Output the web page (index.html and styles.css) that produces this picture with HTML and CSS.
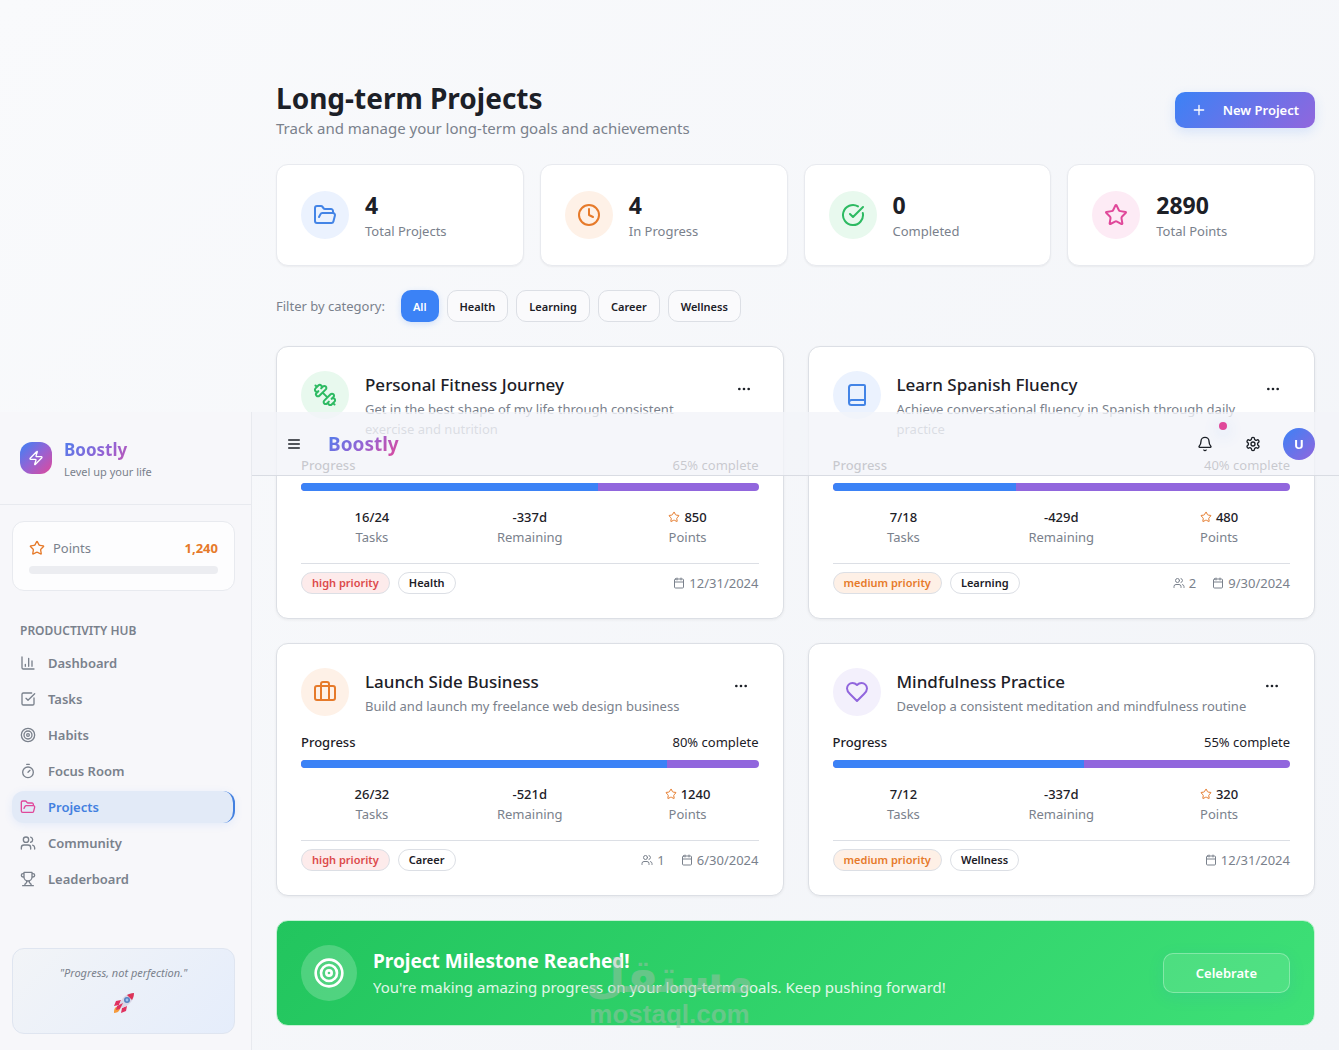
FILE: index.html
```html
<!DOCTYPE html>
<html lang="en">
<head>
  <meta charset="UTF-8">
  <meta name="viewport" content="width=device-width, initial-scale=1">
  <title>Boostly - Long-term Projects</title>
  <link rel="stylesheet" href="styles.css">
</head>
<body>

  <svg class="sprite" aria-hidden="true">
    <symbol id="i-zap" viewBox="0 0 24 24"><path d="M4 14a1 1 0 0 1-.78-1.63l9.9-10.2a.5.5 0 0 1 .86.46l-1.92 6.02A1 1 0 0 0 13 10h7a1 1 0 0 1 .78 1.63l-9.9 10.2a.5.5 0 0 1-.86-.46l1.92-6.02A1 1 0 0 0 11 14z"/></symbol>
    <symbol id="i-star" viewBox="0 0 24 24"><path d="M11.525 2.295a.53.53 0 0 1 .95 0l2.31 4.679a2.123 2.123 0 0 0 1.595 1.16l5.166.756a.53.53 0 0 1 .294.904l-3.736 3.638a2.123 2.123 0 0 0-.611 1.878l.882 5.14a.53.53 0 0 1-.771.56l-4.618-2.428a2.122 2.122 0 0 0-1.973 0L6.396 21.01a.53.53 0 0 1-.77-.56l.881-5.139a2.122 2.122 0 0 0-.611-1.879L2.16 9.795a.53.53 0 0 1 .294-.906l5.165-.755a2.122 2.122 0 0 0 1.597-1.16z"/></symbol>
    <symbol id="i-chart" viewBox="0 0 24 24"><path d="M3 3v16a2 2 0 0 0 2 2h16M18 17V9M13 17V5M8 17v-3"/></symbol>
    <symbol id="i-tasks" viewBox="0 0 24 24"><path d="M21 10.5V19a2 2 0 0 1-2 2H5a2 2 0 0 1-2-2V5a2 2 0 0 1 2-2h12.5M9 11l3 3L22 4"/></symbol>
    <symbol id="i-target" viewBox="0 0 24 24"><circle cx="12" cy="12" r="10"/><circle cx="12" cy="12" r="6"/><circle cx="12" cy="12" r="2"/></symbol>
    <symbol id="i-timer" viewBox="0 0 24 24"><path d="M10 2h4M12 14l3-3"/><circle cx="12" cy="14" r="8"/></symbol>
    <symbol id="i-folder" viewBox="0 0 24 24"><path d="m6 14 1.5-2.9A2 2 0 0 1 9.24 10H20a2 2 0 0 1 1.94 2.5l-1.54 6a2 2 0 0 1-1.95 1.5H4a2 2 0 0 1-2-2V5a2 2 0 0 1 2-2h3.9a2 2 0 0 1 1.69.9l.81 1.2a2 2 0 0 0 1.67.9H18a2 2 0 0 1 2 2v2"/></symbol>
    <symbol id="i-users" viewBox="0 0 24 24"><path d="M16 21v-2a4 4 0 0 0-4-4H6a4 4 0 0 0-4 4v2M22 21v-2a4 4 0 0 0-3-3.87M16 3.13a4 4 0 0 1 0 7.75"/><circle cx="9" cy="7" r="4"/></symbol>
    <symbol id="i-trophy" viewBox="0 0 24 24"><path d="M6 9H4.5a2.5 2.5 0 0 1 0-5H6M18 9h1.5a2.5 2.5 0 0 0 0-5H18M4 22h16M10 14.66V17c0 .55-.47.98-.97 1.21C7.85 18.75 7 20.24 7 22M14 14.66V17c0 .55.47.98.97 1.21C16.15 18.75 17 20.24 17 22M18 2H6v7a6 6 0 0 0 12 0V2Z"/></symbol>
    <symbol id="i-menu" viewBox="0 0 24 24"><path d="M4 12h16M4 6h16M4 18h16"/></symbol>
    <symbol id="i-bell" viewBox="0 0 24 24"><path d="M10.268 21a2 2 0 0 0 3.464 0M3.262 15.326A1 1 0 0 0 4 17h16a1 1 0 0 0 .74-1.673C19.41 13.956 18 12.499 18 8A6 6 0 0 0 6 8c0 4.499-1.411 5.956-2.738 7.326"/></symbol>
    <symbol id="i-settings" viewBox="0 0 24 24"><path d="M12.22 2h-.44a2 2 0 0 0-2 2v.18a2 2 0 0 1-1 1.73l-.43.25a2 2 0 0 1-2 0l-.15-.08a2 2 0 0 0-2.73.73l-.22.38a2 2 0 0 0 .73 2.73l.15.1a2 2 0 0 1 1 1.72v.51a2 2 0 0 1-1 1.74l-.15.09a2 2 0 0 0-.73 2.73l.22.38a2 2 0 0 0 2.73.73l.15-.08a2 2 0 0 1 2 0l.43.25a2 2 0 0 1 1 1.73V20a2 2 0 0 0 2 2h.44a2 2 0 0 0 2-2v-.18a2 2 0 0 1 1-1.73l.43-.25a2 2 0 0 1 2 0l.15.08a2 2 0 0 0 2.73-.73l.22-.39a2 2 0 0 0-.73-2.73l-.15-.08a2 2 0 0 1-1-1.74v-.5a2 2 0 0 1 1-1.74l.15-.09a2 2 0 0 0 .73-2.73l-.22-.38a2 2 0 0 0-2.73-.73l-.15.08a2 2 0 0 1-2 0l-.43-.25a2 2 0 0 1-1-1.73V4a2 2 0 0 0-2-2z"/><circle cx="12" cy="12" r="3"/></symbol>
    <symbol id="i-plus" viewBox="0 0 24 24"><path d="M5 12h14M12 5v14"/></symbol>
    <symbol id="i-clock" viewBox="0 0 24 24"><circle cx="12" cy="12" r="10"/><path d="M12 6v6l4 2"/></symbol>
    <symbol id="i-check" viewBox="0 0 24 24"><path d="M21.801 10A10 10 0 1 1 17 3.335M9 11l3 3L22 4"/></symbol>
    <symbol id="i-dots" viewBox="0 0 24 24"><circle cx="12" cy="12" r="1"/><circle cx="19" cy="12" r="1"/><circle cx="5" cy="12" r="1"/></symbol>
    <symbol id="i-calendar" viewBox="0 0 24 24"><path d="M8 2v4M16 2v4M3 10h18"/><rect x="3" y="4" width="18" height="18" rx="2"/></symbol>
    <symbol id="i-dumbbell" viewBox="0 0 24 24"><path d="M14.4 14.4 9.6 9.6M18.657 21.485a2 2 0 1 1-2.829-2.828l-1.767 1.768a2 2 0 1 1-2.829-2.829l6.364-6.364a2 2 0 1 1 2.829 2.829l-1.768 1.767a2 2 0 1 1 2.828 2.829zM21.5 21.5l-1.4-1.4M3.9 3.9 2.5 2.5M6.404 12.768a2 2 0 1 1-2.829-2.829l1.768-1.767a2 2 0 1 1-2.828-2.829l2.828-2.828a2 2 0 1 1 2.829 2.828l1.767-1.768a2 2 0 1 1 2.829 2.829z"/></symbol>
    <symbol id="i-book" viewBox="0 0 24 24"><path d="M4 19.5v-15A2.5 2.5 0 0 1 6.5 2H19a1 1 0 0 1 1 1v18a1 1 0 0 1-1 1H6.5a1 1 0 0 1 0-5H20"/></symbol>
    <symbol id="i-briefcase" viewBox="0 0 24 24"><path d="M16 20V4a2 2 0 0 0-2-2h-4a2 2 0 0 0-2 2v16"/><rect x="2" y="6" width="20" height="14" rx="2"/></symbol>
    <symbol id="i-heart" viewBox="0 0 24 24"><path d="M19 14c1.49-1.46 3-3.21 3-5.5A5.5 5.5 0 0 0 16.5 3c-1.76 0-3 .5-4.5 2-1.5-1.5-2.74-2-4.5-2A5.5 5.5 0 0 0 2 8.5c0 2.3 1.5 4.05 3 5.5l7 7Z"/></symbol>
  </svg>

  <aside class="sidebar">
    <div class="brand">
      <span class="brand-icon"><svg class="icon"><use href="#i-zap"/></svg></span>
      <div>
        <div class="logo-text">Boostly</div>
        <div class="tagline">Level up your life</div>
      </div>
    </div>

    <div class="sidebar-body">
      <div class="points-card">
        <div class="points-row">
          <svg class="icon"><use href="#i-star"/></svg>
          <span>Points</span>
          <strong>1,240</strong>
        </div>
        <div class="points-bar"></div>
      </div>

      <div class="nav-label">Productivity Hub</div>
      <nav class="nav">
        <a href="#"><svg class="icon"><use href="#i-chart"/></svg>Dashboard</a>
        <a href="#"><svg class="icon"><use href="#i-tasks"/></svg>Tasks</a>
        <a href="#"><svg class="icon"><use href="#i-target"/></svg>Habits</a>
        <a href="#"><svg class="icon"><use href="#i-timer"/></svg>Focus Room</a>
        <a href="#" class="active"><svg class="icon"><use href="#i-folder"/></svg>Projects</a>
        <a href="#"><svg class="icon"><use href="#i-users"/></svg>Community</a>
        <a href="#"><svg class="icon"><use href="#i-trophy"/></svg>Leaderboard</a>
      </nav>

      <div class="quote">
        <p>"Progress, not perfection."</p>
        <svg class="rocket" viewBox="0 0 24 24">
          <path d="M3 17c1-2 4-1 5 1-1 3-4 4-6 4 0-2 0-3 1-5z" fill="#f59a3c"/>
          <path d="M9 9 4 10l-2 5 5-1zM15 15l-1 5-5 2 1-5z" fill="#e0315f"/>
          <path d="M22 2c-7 0-12 4-15 12l3 3c8-3 12-8 12-15z" fill="#d9d6e6"/>
          <path d="M22 2c-3 0-5 1-7 2l5 5c1-2 2-4 2-7z" fill="#dd3358"/>
          <circle cx="15" cy="9" r="3" fill="#5683c2"/>
          <circle cx="15" cy="9" r="1.4" fill="#9cc3ef"/>
          <path d="m11 12-6 3-1 4 4-1z" fill="#e0315f"/>
        </svg>
      </div>
    </div>
  </aside>

  <header class="topbar">
    <button class="icon-btn" aria-label="Toggle sidebar"><svg class="icon"><use href="#i-menu"/></svg></button>
    <span class="logo-text">Boostly</span>
    <div class="topbar-actions">
      <button class="icon-btn" aria-label="Notifications"><svg class="icon"><use href="#i-bell"/></svg><span class="dot"></span></button>
      <button class="icon-btn" aria-label="Settings"><svg class="icon"><use href="#i-settings"/></svg></button>
      <button class="avatar">U</button>
    </div>
  </header>

  <main class="main">
    <div class="page-head">
      <div>
        <h1>Long-term Projects</h1>
        <p>Track and manage your long-term goals and achievements</p>
      </div>
      <button class="new-btn"><svg class="icon"><use href="#i-plus"/></svg>New Project</button>
    </div>

    <div class="stats">
      <div class="stat">
        <span class="bubble blue"><svg class="icon"><use href="#i-folder"/></svg></span>
        <div><div class="stat-value">4</div><div class="stat-label">Total Projects</div></div>
      </div>
      <div class="stat">
        <span class="bubble orange"><svg class="icon"><use href="#i-clock"/></svg></span>
        <div><div class="stat-value">4</div><div class="stat-label">In Progress</div></div>
      </div>
      <div class="stat">
        <span class="bubble green"><svg class="icon"><use href="#i-check"/></svg></span>
        <div><div class="stat-value">0</div><div class="stat-label">Completed</div></div>
      </div>
      <div class="stat">
        <span class="bubble pink"><svg class="icon"><use href="#i-star"/></svg></span>
        <div><div class="stat-value">2890</div><div class="stat-label">Total Points</div></div>
      </div>
    </div>

    <div class="filters">
      <span>Filter by category:</span>
      <button class="active">All</button>
      <button>Health</button>
      <button>Learning</button>
      <button>Career</button>
      <button>Wellness</button>
    </div>

    <div class="projects" id="projectList"></div>

    <div class="banner">
      <span class="banner-icon"><svg class="icon"><use href="#i-target"/></svg></span>
      <div class="banner-text">
        <h2>Project Milestone Reached!</h2>
        <p>You're making amazing progress on your long-term goals. Keep pushing forward!</p>
      </div>
      <button class="celebrate">Celebrate</button>
    </div>
  </main>

  <div class="watermark">
    <span lang="ar" dir="rtl">مستقل</span>
    <span>mostaql.com</span>
  </div>

  <script>
    const projects = [
      { title: 'Personal Fitness Journey', text: 'Get in the best shape of my life through consistent exercise and nutrition', icon: 'dumbbell', color: 'green', percent: 65, tasks: '16/24', left: '-337d', points: 850, priority: 'high', category: 'Health', people: 0, date: '12/31/2024' },
      { title: 'Learn Spanish Fluency', text: 'Achieve conversational fluency in Spanish through daily practice', icon: 'book', color: 'blue', percent: 40, tasks: '7/18', left: '-429d', points: 480, priority: 'medium', category: 'Learning', people: 2, date: '9/30/2024' },
      { title: 'Launch Side Business', text: 'Build and launch my freelance web design business', icon: 'briefcase', color: 'orange', percent: 80, tasks: '26/32', left: '-521d', points: 1240, priority: 'high', category: 'Career', people: 1, date: '6/30/2024' },
      { title: 'Mindfulness Practice', text: 'Develop a consistent meditation and mindfulness routine', icon: 'heart', color: 'purple', percent: 55, tasks: '7/12', left: '-337d', points: 320, priority: 'medium', category: 'Wellness', people: 0, date: '12/31/2024' }
    ];

    const icon = name => `<svg class="icon"><use href="#i-${name}"/></svg>`;

    document.getElementById('projectList').innerHTML = projects.map(p => `
      <article class="project">
        <div class="project-head">
          <div class="project-info">
            <span class="bubble ${p.color}">${icon(p.icon)}</span>
            <div>
              <h3>${p.title}</h3>
              <p>${p.text}</p>
            </div>
          </div>
          <button class="icon-btn" aria-label="More options">${icon('dots')}</button>
        </div>
        <div class="progress-row"><span>Progress</span><span>${p.percent}% complete</span></div>
        <div class="progress"><div class="progress-fill" style="width: ${p.percent}%"></div></div>
        <div class="numbers">
          <div><strong>${p.tasks}</strong><span>Tasks</span></div>
          <div><strong>${p.left}</strong><span>Remaining</span></div>
          <div><strong>${icon('star')}${p.points}</strong><span>Points</span></div>
        </div>
        <div class="project-foot">
          <span class="badge ${p.priority}">${p.priority} priority</span>
          <span class="badge">${p.category}</span>
          <div class="meta">
            ${p.people ? `<span>${icon('users')}${p.people}</span>` : ''}
            <span>${icon('calendar')}${p.date}</span>
          </div>
        </div>
      </article>
    `).join('');
  </script>

</body>
</html>
```
FILE: styles.css
```css
:root {
  --text: #1c2027;
  --muted: #7a818c;
  --border: #dcdfe5;
  --soft-border: #e8eaef;
  --blue: #3b82f6;
  --purple: #9166dd;
  --pink: #e0489a;
  --orange: #e67a2a;
  --sidebar-width: 252px;
  --bar-top: 412px;
}

* {
  box-sizing: border-box;
}

body {
  margin: 0;
  font-family: 'Noto Sans', 'Open Sans', sans-serif;
  font-size: 13px;
  line-height: 20px;
  color: var(--text);
  background: linear-gradient(135deg, #f9fafc, #f2f4f8);
}

h1, h2, h3, p {
  margin: 0;
}

button {
  font-family: inherit;
  border: 0;
  padding: 0;
  color: inherit;
  background: none;
  cursor: pointer;
}

.sprite {
  display: none;
}

.icon {
  width: 16px;
  height: 16px;
  flex-shrink: 0;
  fill: none;
  stroke: currentColor;
  stroke-width: 2;
  stroke-linecap: round;
  stroke-linejoin: round;
}

.logo-text {
  font-size: 19px;
  line-height: 28px;
  font-weight: 700;
  color: transparent;
  background: linear-gradient(135deg, #4a80ee, #9563d4, #e0489a);
  -webkit-background-clip: text;
  background-clip: text;
}

/* sidebar */

.sidebar {
  position: fixed;
  top: var(--bar-top);
  bottom: 0;
  left: 0;
  width: var(--sidebar-width);
  display: flex;
  flex-direction: column;
  background: #f7f7fa;
  border-right: 1px solid var(--soft-border);
}

.brand {
  display: flex;
  align-items: center;
  gap: 12px;
  padding: 24px 20px;
  border-bottom: 1px solid var(--soft-border);
}

.brand .logo-text {
  font-size: 17px;
}

.brand-icon {
  width: 32px;
  height: 32px;
  border-radius: 12px;
  display: flex;
  align-items: center;
  justify-content: center;
  color: #fff;
  background: linear-gradient(135deg, #3b82f6, #9563d4, #e0489a);
}

.tagline {
  font-size: 11px;
  line-height: 16px;
  color: var(--muted);
}

.sidebar-body {
  flex: 1;
  display: flex;
  flex-direction: column;
  padding: 16px 16px 16px 12px;
}

.points-card {
  padding: 16px;
  border: 1px solid var(--soft-border);
  border-radius: 12px;
  background: #fdfdfe;
  margin-bottom: 24px;
}

.points-row {
  display: flex;
  align-items: center;
  gap: 8px;
  margin-bottom: 8px;
  color: var(--muted);
}

.points-row .icon,
.points-row strong {
  color: var(--orange);
}

.points-row strong {
  margin-left: auto;
}

.points-bar {
  height: 8px;
  border-radius: 4px;
  background: #ecedf1;
}

.nav-label {
  padding: 0 8px;
  font-size: 12px;
  line-height: 32px;
  font-weight: 600;
  text-transform: uppercase;
  color: var(--muted);
}

.nav {
  display: flex;
  flex-direction: column;
  gap: 4px;
}

.nav a {
  display: flex;
  align-items: center;
  gap: 12px;
  height: 32px;
  padding: 0 8px;
  border-radius: 12px;
  font-weight: 600;
  color: var(--muted);
  text-decoration: none;
}

.nav a.active {
  color: #4380e0;
  background: #e2eaf7;
  border-right: 2px solid #4380e0;
  box-shadow: 0 2px 8px rgba(59, 130, 246, 0.1);
}

.nav a.active .icon {
  color: var(--pink);
}

.quote {
  margin-top: auto;
  padding: 16px;
  border: 1px solid #dfe5f0;
  border-radius: 12px;
  text-align: center;
  background: linear-gradient(135deg, #f2f4f7, #e5edfb);
}

.quote p {
  margin-bottom: 8px;
  font-size: 11px;
  line-height: 16px;
  font-style: italic;
  color: var(--muted);
}

.rocket {
  display: block;
  width: 24px;
  height: 28px;
  margin: 0 auto;
}

/* top bar */

.topbar {
  position: fixed;
  top: var(--bar-top);
  left: var(--sidebar-width);
  right: 0;
  z-index: 2;
  height: 64px;
  display: flex;
  align-items: center;
  gap: 16px;
  padding: 0 24px;
  background: rgba(243, 244, 249, 0.8);
  border-bottom: 1px solid #d9dce3;
}

.topbar-actions {
  margin-left: auto;
  display: flex;
  align-items: center;
  gap: 12px;
}

.icon-btn {
  position: relative;
  width: 36px;
  height: 36px;
  display: flex;
  align-items: center;
  justify-content: center;
}

.dot {
  position: absolute;
  top: -4px;
  right: -4px;
  width: 8px;
  height: 8px;
  border-radius: 50%;
  background: var(--pink);
  box-shadow: 0 4px 16px rgba(59, 130, 246, 0.3);
}

.avatar {
  width: 32px;
  height: 32px;
  border-radius: 50%;
  font-size: 13px;
  font-weight: 700;
  color: #fff;
  background: linear-gradient(135deg, var(--blue), var(--purple));
}

/* page */

.main {
  margin-left: var(--sidebar-width);
  padding: 80px 24px 24px;
  display: flex;
  flex-direction: column;
  gap: 24px;
}

.page-head {
  display: flex;
  align-items: center;
  justify-content: space-between;
}

.page-head h1 {
  font-size: 28px;
  line-height: 36px;
}

.page-head p {
  font-size: 15px;
  line-height: 24px;
  color: var(--muted);
}

.new-btn {
  display: flex;
  align-items: center;
  gap: 16px;
  height: 36px;
  padding: 0 16px;
  border-radius: 10px;
  font-size: 13px;
  font-weight: 600;
  color: #fff;
  background: linear-gradient(135deg, var(--blue), var(--purple));
  box-shadow: 0 4px 12px rgba(59, 130, 246, 0.16);
}

.stats {
  display: grid;
  grid-template-columns: repeat(4, 1fr);
  gap: 16px;
}

.stat {
  display: flex;
  align-items: center;
  gap: 16px;
  padding: 24px;
  background: #fff;
  border: 1px solid var(--soft-border);
  border-radius: 12px;
  box-shadow: 0 1px 2px rgba(0, 0, 0, 0.05);
}

.stat-value {
  font-size: 23px;
  line-height: 32px;
  font-weight: 700;
}

.stat-label {
  color: var(--muted);
}

.bubble {
  width: 48px;
  height: 48px;
  flex-shrink: 0;
  border-radius: 50%;
  display: flex;
  align-items: center;
  justify-content: center;
}

.bubble .icon {
  width: 24px;
  height: 24px;
}

.blue { color: #4384e6; background: #ebf2fe; }
.orange { color: var(--orange); background: #fef1e7; }
.green { color: #2dba62; background: #e8f9ee; }
.pink { color: var(--pink); background: #fdebf5; }
.purple { color: var(--purple); background: #f3f0fc; }

.filters {
  display: flex;
  align-items: center;
  gap: 8px;
}

.filters span {
  margin-right: 8px;
  color: var(--muted);
}

.filters button {
  height: 32px;
  padding: 0 12px;
  border: 1px solid var(--border);
  border-radius: 10px;
  font-size: 11px;
  font-weight: 600;
  background: #fafafc;
}

.filters button.active {
  border: 0;
  color: #fff;
  background: var(--blue);
  box-shadow: 0 2px 6px rgba(59, 130, 246, 0.2);
}

/* project cards */

.projects {
  display: grid;
  grid-template-columns: repeat(2, 1fr);
  gap: 24px;
}

.project {
  padding: 24px;
  background: #fff;
  border: 1px solid var(--border);
  border-radius: 12px;
  box-shadow: 0 1px 3px rgba(0, 0, 0, 0.06);
}

.project-head {
  display: flex;
  align-items: flex-start;
  justify-content: space-between;
  gap: 4px;
  margin-bottom: 16px;
}

.project-info {
  display: flex;
  gap: 16px;
}

.project-info h3 {
  font-size: 17px;
  line-height: 28px;
  font-weight: 500;
}

.project-info p {
  color: var(--muted);
}

.progress-row {
  display: flex;
  justify-content: space-between;
  margin-bottom: 8px;
}

.progress-row span:first-child {
  font-weight: 500;
}

.progress {
  height: 8px;
  margin-bottom: 16px;
  border-radius: 4px;
  overflow: hidden;
  background: var(--purple);
}

.progress-fill {
  height: 100%;
  background: var(--blue);
}

.numbers {
  display: grid;
  grid-template-columns: repeat(3, 1fr);
  gap: 16px;
  padding-bottom: 16px;
  text-align: center;
  border-bottom: 1px solid var(--border);
}

.numbers strong {
  display: flex;
  align-items: center;
  justify-content: center;
  gap: 4px;
  font-weight: 500;
}

.numbers span {
  color: var(--muted);
}

.numbers .icon,
.meta .icon {
  width: 12px;
  height: 12px;
}

.numbers .icon {
  color: var(--orange);
}

.project-foot {
  display: flex;
  align-items: center;
  gap: 8px;
  padding-top: 8px;
}

.badge {
  padding: 0 10px;
  border: 1px solid var(--border);
  border-radius: 11px;
  font-size: 11px;
  font-weight: 600;
}

.badge.high {
  color: #dc4a4a;
  background: #fdebeb;
}

.badge.medium {
  color: var(--orange);
  background: #fef0e6;
}

.meta {
  margin-left: auto;
  display: flex;
  gap: 16px;
  color: var(--muted);
}

.meta span {
  display: flex;
  align-items: center;
  gap: 4px;
}

/* milestone banner */

.banner {
  display: flex;
  align-items: center;
  gap: 16px;
  padding: 24px;
  border: 1px solid #c5f1d5;
  border-radius: 12px;
  color: #fff;
  background: linear-gradient(135deg, #22c55e, #3ee077);
}

.banner-icon {
  width: 56px;
  height: 56px;
  flex-shrink: 0;
  border-radius: 50%;
  display: flex;
  align-items: center;
  justify-content: center;
  background: rgba(255, 255, 255, 0.2);
}

.banner-icon .icon {
  width: 32px;
  height: 32px;
}

.banner h2 {
  font-size: 19px;
  line-height: 28px;
}

.banner p {
  font-size: 15px;
  line-height: 24px;
  opacity: 0.85;
}

.celebrate {
  height: 40px;
  padding: 0 32px;
  margin-left: auto;
  border: 1px solid rgba(255, 255, 255, 0.3);
  border-radius: 10px;
  font-size: 13px;
  font-weight: 600;
  background: rgba(255, 255, 255, 0.1);
  box-shadow: 0 4px 16px rgba(59, 130, 246, 0.12);
}

.watermark {
  position: absolute;
  bottom: 22px;
  left: 50%;
  transform: translateX(-50%);
  z-index: 3;
  display: flex;
  flex-direction: column;
  align-items: center;
  font-family: 'Liberation Sans', sans-serif;
  font-size: 26px;
  line-height: 28px;
  font-weight: 700;
  color: rgba(160, 190, 170, 0.5);
  pointer-events: none;
}

.watermark [lang='ar'] {
  font-family: 'DejaVu Sans', sans-serif;
  font-size: 46px;
  line-height: 48px;
}
```
